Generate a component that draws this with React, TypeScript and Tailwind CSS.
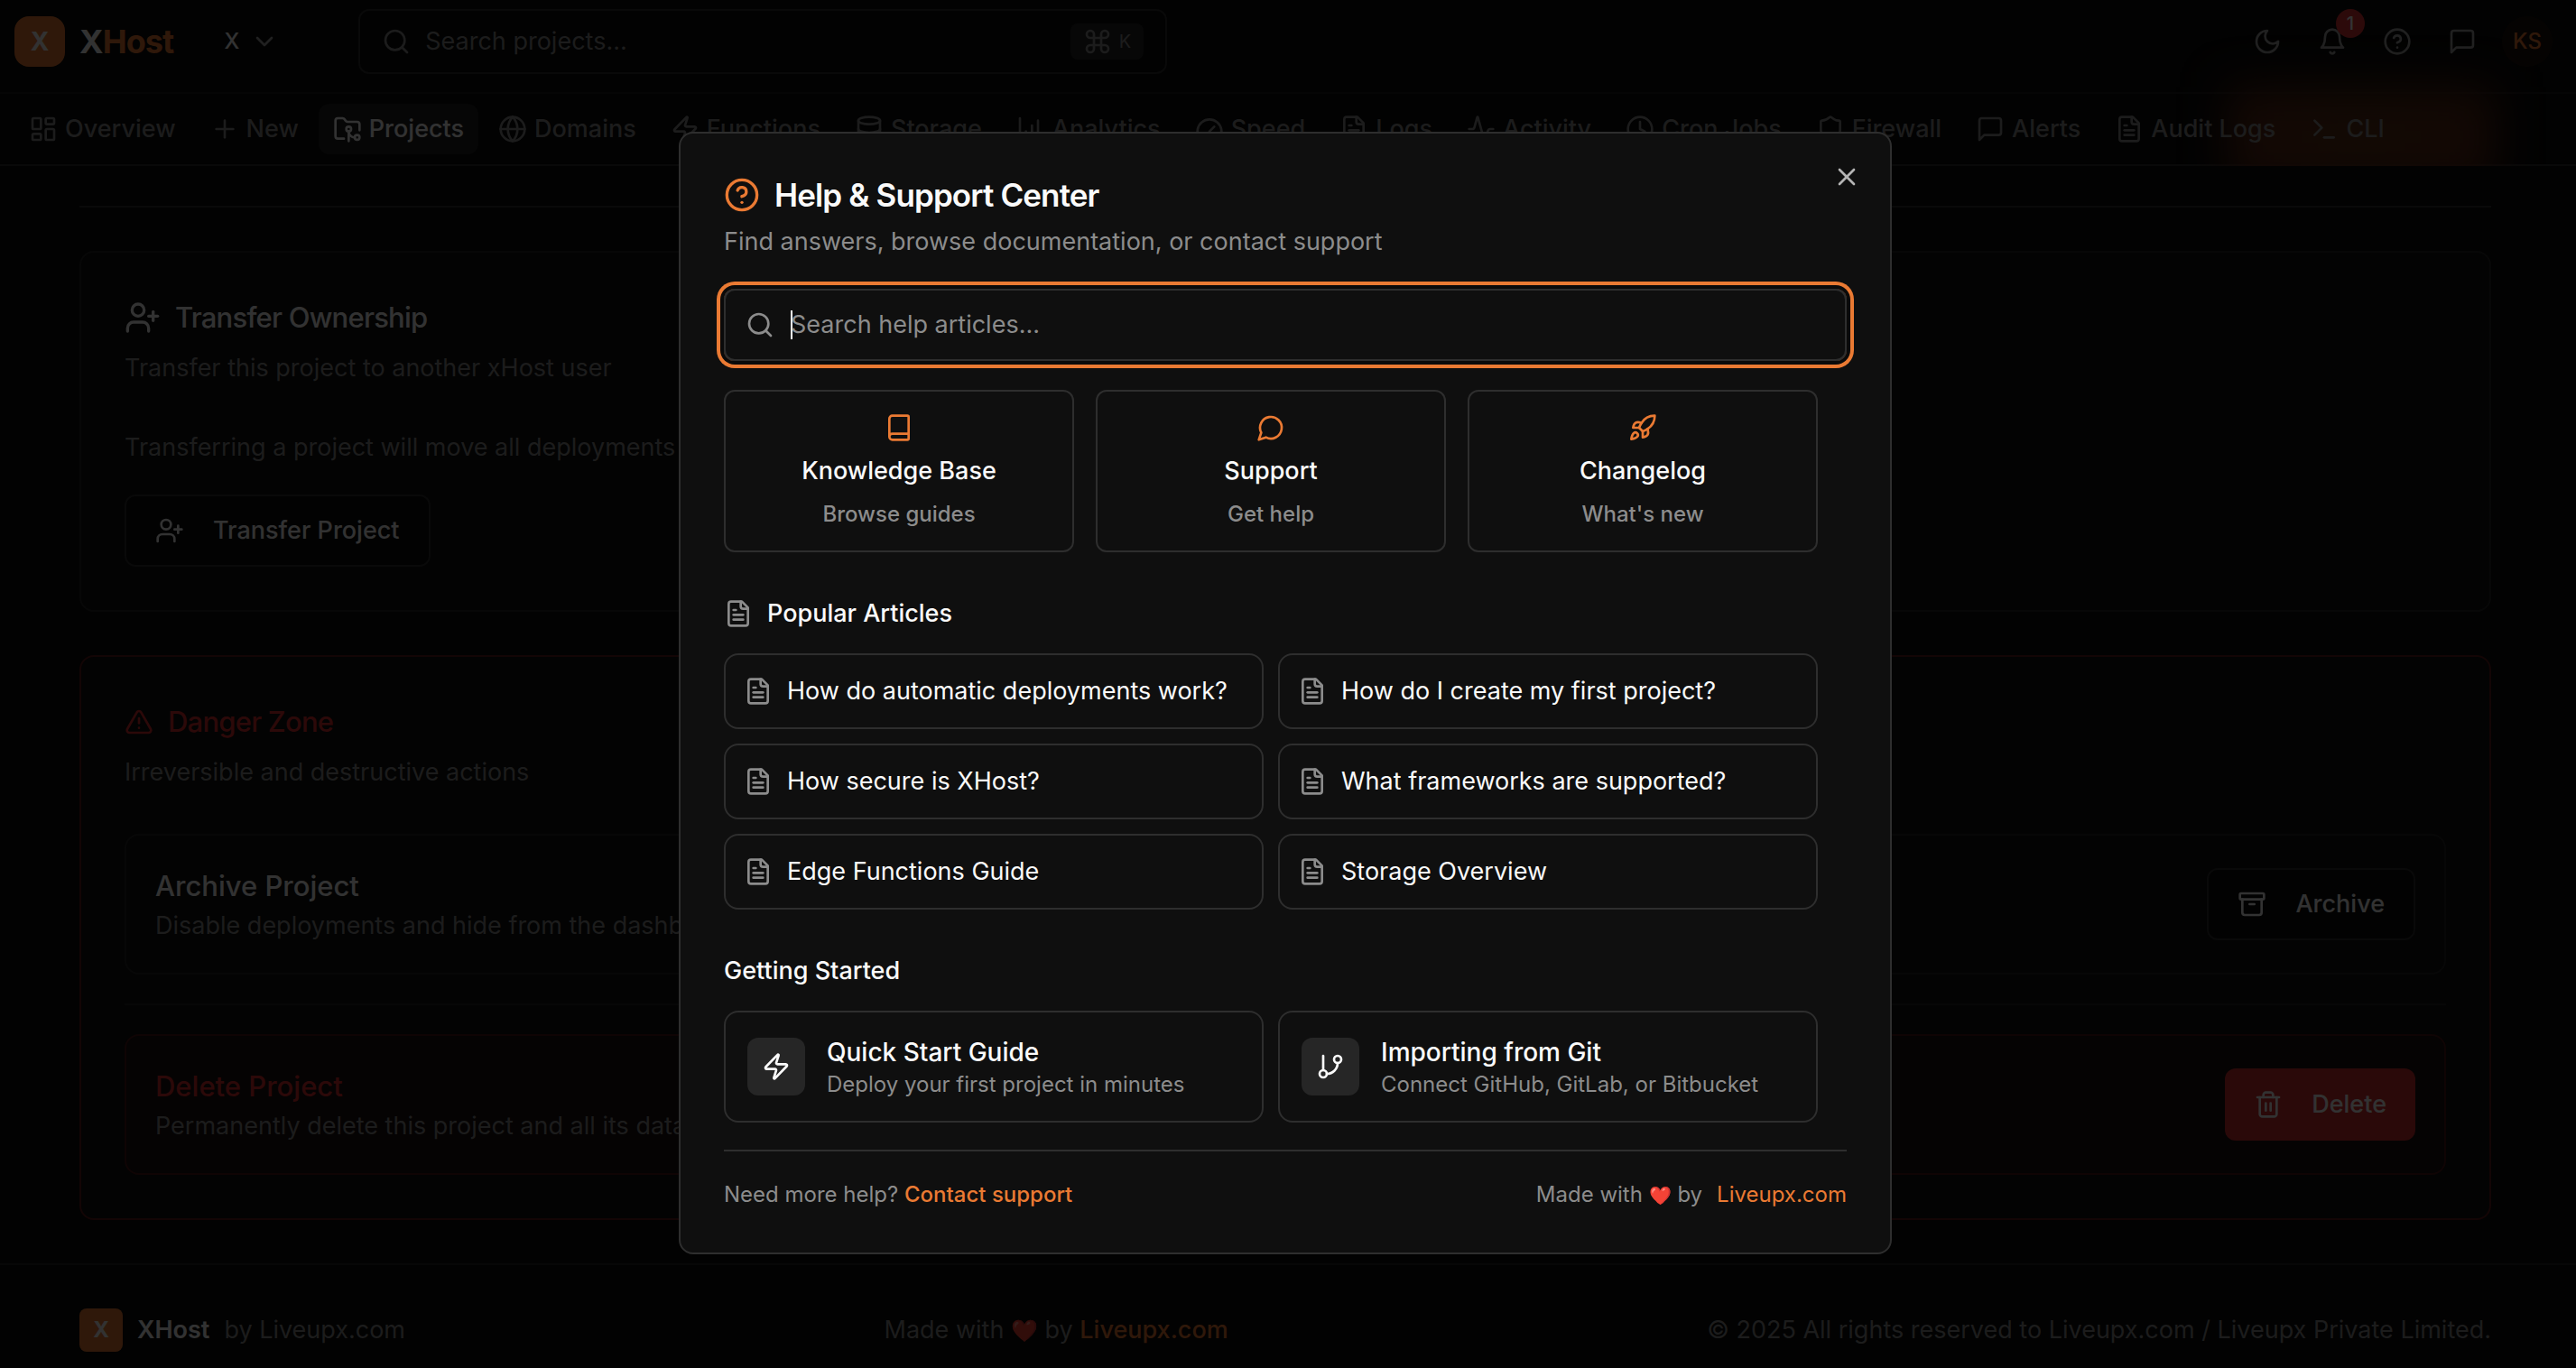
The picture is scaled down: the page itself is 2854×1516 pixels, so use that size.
import type { ReactNode } from "react";
import {
  Activity,
  Archive,
  ChartColumnIncreasing,
  ChevronDown,
  CircleHelp,
  Clock,
  Command,
  Database,
  FolderGit2,
  Gauge,
  Globe,
  LayoutDashboard,
  Plus,
  Search,
  Shield,
  Terminal,
  TriangleAlert,
  X,
} from "lucide-react";

type IconProps = { className?: string };

function Glyph({ className, children }: IconProps & { children: ReactNode }) {
  return (
    <svg
      viewBox="0 0 24 24"
      fill="none"
      stroke="currentColor"
      strokeWidth="2"
      strokeLinecap="round"
      strokeLinejoin="round"
      aria-hidden="true"
      className={className}
    >
      {children}
    </svg>
  );
}

const FileText = ({ className }: IconProps) => (
  <Glyph className={className}>
    <path d="M15 2H6a2 2 0 0 0-2 2v16a2 2 0 0 0 2 2h12a2 2 0 0 0 2-2V7Z" />
    <path d="M14 2v4a2 2 0 0 0 2 2h4" />
    <path d="M10 9H8" />
    <path d="M16 13H8" />
    <path d="M16 17H8" />
  </Glyph>
);

const MessageSquare = ({ className }: IconProps) => (
  <Glyph className={className}>
    <path d="M21 15a2 2 0 0 1-2 2H7l-4 4V5a2 2 0 0 1 2-2h14a2 2 0 0 1 2 2z" />
  </Glyph>
);

const MessageCircle = ({ className }: IconProps) => (
  <Glyph className={className}>
    <path d="M7.9 20A9 9 0 1 0 4 16.1L2 22Z" />
  </Glyph>
);

const Book = ({ className }: IconProps) => (
  <Glyph className={className}>
    <path d="M4 19.5v-15A2.5 2.5 0 0 1 6.5 2H19a1 1 0 0 1 1 1v18a1 1 0 0 1-1 1H6.5a1 1 0 0 1 0-5H20" />
  </Glyph>
);

const Rocket = ({ className }: IconProps) => (
  <Glyph className={className}>
    <path d="M4.5 16.5c-1.5 1.26-2 5-2 5s3.74-.5 5-2c.71-.84.7-2.13-.09-2.91a2.18 2.18 0 0 0-2.91-.09z" />
    <path d="m12 15-3-3a22 22 0 0 1 2-3.95A12.88 12.88 0 0 1 22 2c0 2.72-.78 7.5-6 11a22.35 22.35 0 0 1-4 2z" />
    <path d="M9 12H4s.55-3.03 2-4c1.62-1.08 5 0 5 0" />
    <path d="M12 15v5s3.03-.55 4-2c1.08-1.62 0-5 0-5" />
  </Glyph>
);

const Zap = ({ className }: IconProps) => (
  <Glyph className={className}>
    <path d="M4 14a1 1 0 0 1-.78-1.63l9.9-10.2a.5.5 0 0 1 .86.46l-1.92 6.02A1 1 0 0 0 13 10h7a1 1 0 0 1 .78 1.63l-9.9 10.2a.5.5 0 0 1-.86-.46l1.92-6.02A1 1 0 0 0 11 14z" />
  </Glyph>
);

const GitBranch = ({ className }: IconProps) => (
  <Glyph className={className}>
    <line x1="6" x2="6" y1="3" y2="15" />
    <circle cx="18" cy="6" r="3" />
    <circle cx="6" cy="18" r="3" />
    <path d="M18 9a9 9 0 0 1-9 9" />
  </Glyph>
);

const Moon = ({ className }: IconProps) => (
  <Glyph className={className}>
    <path d="M12 3a6 6 0 0 0 9 9 9 9 0 1 1-9-9Z" />
  </Glyph>
);

const Bell = ({ className }: IconProps) => (
  <Glyph className={className}>
    <path d="M6 8a6 6 0 0 1 12 0c0 7 3 9 3 9H3s3-2 3-9" />
    <path d="M10.3 21a1.94 1.94 0 0 0 3.4 0" />
  </Glyph>
);

const UserPlus = ({ className }: IconProps) => (
  <Glyph className={className}>
    <path d="M16 21v-2a4 4 0 0 0-4-4H6a4 4 0 0 0-4 4v2" />
    <circle cx="9" cy="7" r="4" />
    <line x1="19" x2="19" y1="8" y2="14" />
    <line x1="22" x2="16" y1="11" y2="11" />
  </Glyph>
);

const Trash = ({ className }: IconProps) => (
  <Glyph className={className}>
    <path d="M3 6h18" />
    <path d="M19 6v14c0 1-1 2-2 2H7c-1 0-2-1-2-2V6" />
    <path d="M8 6V4c0-1 1-2 2-2h4c1 0 2 1 2 2v2" />
    <line x1="10" x2="10" y1="11" y2="17" />
    <line x1="14" x2="14" y1="11" y2="17" />
  </Glyph>
);

type IconType = (props: IconProps) => ReactNode;

const NAV: { label: string; icon: IconType | typeof Globe; active?: boolean }[] = [
  { label: "Overview", icon: LayoutDashboard },
  { label: "New", icon: Plus },
  { label: "Projects", icon: FolderGit2, active: true },
  { label: "Domains", icon: Globe },
  { label: "Functions", icon: Zap },
  { label: "Storage", icon: Database },
  { label: "Analytics", icon: ChartColumnIncreasing },
  { label: "Speed", icon: Gauge },
  { label: "Logs", icon: FileText },
  { label: "Activity", icon: Activity },
  { label: "Cron Jobs", icon: Clock },
  { label: "Firewall", icon: Shield },
  { label: "Alerts", icon: MessageSquare },
  { label: "Audit Logs", icon: FileText },
  { label: "CLI", icon: Terminal },
];

const QUICK = [
  { title: "Knowledge Base", note: "Browse guides", icon: Book },
  { title: "Support", note: "Get help", icon: MessageCircle },
  { title: "Changelog", note: "What's new", icon: Rocket },
];

const ARTICLES = [
  "How do automatic deployments work?",
  "How do I create my first project?",
  "How secure is XHost?",
  "What frameworks are supported?",
  "Edge Functions Guide",
  "Storage Overview",
];

const GUIDES = [
  { title: "Quick Start Guide", note: "Deploy your first project in minutes", icon: Zap },
  { title: "Importing from Git", note: "Connect GitHub, GitLab, or Bitbucket", icon: GitBranch },
];

function Header() {
  return (
    <header className="flex h-[104px] items-center border-b-2 border-[#1c1c1c] pr-[22px] pb-[10px] pl-4">
      <a href="#" className="flex items-center gap-4">
        <span className="flex size-14 items-center justify-center rounded-2xl bg-[#ea7a33] text-[28px] font-bold">
          X
        </span>
        <span className="text-4xl font-bold tracking-tight">
          X<span className="text-[#ea7a33]">Host</span>
        </span>
      </a>
      <button className="ml-14 flex items-center gap-3 text-2xl font-medium">
        X
        <ChevronDown className="size-8 text-[#a0a0a0]" />
      </button>
      <div className="ml-22 flex h-[72px] w-full max-w-[896px] items-center rounded-xl border-2 border-[#2e2e2e] px-6">
        <Search className="size-8 shrink-0 text-[#8c8c8c]" />
        <input
          aria-label="Search projects"
          placeholder="Search projects..."
          className="ml-4 w-full min-w-0 bg-transparent text-[27px] outline-none placeholder:text-[#8c8c8c]"
        />
        <kbd className="flex h-10 shrink-0 items-center gap-2 rounded-lg bg-[#262626] px-3.5 font-[Inter] text-xl text-[#8c8c8c]">
          <Command className="size-8" />K
        </kbd>
      </div>
      <div className="ml-auto flex shrink-0 items-center gap-2 text-[#a0a0a0]">
        <button aria-label="Toggle theme" className="flex size-16 items-center justify-center">
          <Moon className="size-8" />
        </button>
        <button aria-label="Notifications" className="relative flex size-16 items-center justify-center">
          <Bell className="size-8" />
          <span className="absolute -top-1 -right-1 flex size-8 items-center justify-center rounded-full bg-[#dc3333] text-xl font-medium text-white">
            1
          </span>
        </button>
        <button aria-label="Help" className="flex size-16 items-center justify-center">
          <CircleHelp className="size-8" />
        </button>
        <button aria-label="Feedback" className="flex size-16 items-center justify-center">
          <MessageSquare className="size-8" />
        </button>
        <button aria-label="Account" className="flex size-16 items-center justify-center">
          <span className="flex size-14 items-center justify-center rounded-full bg-[#1d130c] text-2xl font-medium text-[#ea7a33]">
            KS
          </span>
        </button>
      </div>
    </header>
  );
}

function Nav() {
  return (
    <nav className="relative flex h-20 items-center gap-1.5 border-b-2 border-[#2e2e2e] px-4 whitespace-nowrap">
      <div className="absolute -top-2 right-[90px] h-28 w-[296px] bg-linear-to-r from-[#5e2816] via-[#5c3016] to-[#5e2816] blur-xl" />
      {NAV.map(({ label, icon: Icon, active }) => (
        <a
          key={label}
          href="#"
          className={
            active
              ? "relative flex h-14 items-center gap-2 rounded-xl bg-[#222222] px-4 text-[27px] font-medium text-[#fafafa]"
              : "relative flex h-14 items-center gap-2 rounded-xl px-4 text-[27px] font-medium text-[#8c8c8c]"
          }
        >
          <Icon className="size-8 shrink-0" />
          {label}
        </a>
      ))}
    </nav>
  );
}

function Page() {
  return (
    <div className="relative bg-[#0a0a0a]">
      <main className="mr-[6px] px-22 pb-12">
        <div className="h-[46px] border-b-2 border-[#2e2e2e]" />
        <section className="mt-12 rounded-2xl border-2 border-[#262626] bg-[#0f0f0f] p-12">
          <h2 className="flex h-12 items-center gap-4 text-[31px] font-medium tracking-tight">
            <UserPlus className="size-10" />
            Transfer Ownership
          </h2>
          <p className="mt-3 text-[27px] leading-10 text-[#8c8c8c]">
            Transfer this project to another xHost user
          </p>
          <p className="mt-12 text-[27px] leading-10 text-[#8c8c8c]">
            Transferring a project will move all deployments too
          </p>
          <button className="mt-8 flex h-20 items-center gap-8 rounded-xl border-2 border-[#2e2e2e] bg-[#0a0a0a] px-8 text-[27px] font-medium">
            <UserPlus className="size-8" />
            Transfer Project
          </button>
        </section>

        <section className="mt-12 rounded-2xl border-2 border-[#5f1a1a] bg-[#0f0f0f] p-12">
          <h2 className="flex h-12 items-center gap-4 text-[31px] font-medium tracking-tight text-[#dc2f2f]">
            <TriangleAlert className="size-8" />
            Danger Zone
          </h2>
          <p className="mt-3 text-[27px] leading-10 text-[#8c8c8c]">Irreversible and destructive actions</p>

          <div className="mt-12 flex items-center justify-between rounded-2xl border-2 border-[#262626] p-8">
            <div>
              <h3 className="text-[31px] leading-12 font-medium">Archive Project</h3>
              <p className="text-[27px] leading-10 text-[#8c8c8c]">
                Disable deployments and hide from the dashboard
              </p>
            </div>
            <button className="flex h-20 items-center gap-8 rounded-xl border-2 border-[#2e2e2e] bg-[#0a0a0a] px-8 text-[27px] font-medium">
              <Archive className="size-8" />
              Archive
            </button>
          </div>

          <hr className="my-8 border-t-2 border-[#262626]" />

          <div className="flex items-center justify-between rounded-2xl border-2 border-[#4c1717] bg-[#190f10] p-8">
            <div>
              <h3 className="text-[31px] leading-12 font-medium text-[#dc2f2f]">Delete Project</h3>
              <p className="text-[27px] leading-10 text-[#8c8c8c]">
                Permanently delete this project and all its data
              </p>
            </div>
            <button className="flex h-20 items-center gap-8 rounded-xl bg-[#d32f2f] px-8 text-[27px] font-medium">
              <Trash className="size-8" />
              Delete
            </button>
          </div>
        </section>
      </main>

      <footer className="border-t-2 border-[#262626] pt-12 pr-[6px] pb-4">
        <div className="flex items-center justify-between px-22 text-[27px] leading-12 text-[#8c8c8c]">
          <div className="flex items-center gap-4">
            <span className="flex size-12 items-center justify-center rounded-lg bg-[#ea7a33] text-2xl font-bold text-[#fafafa]">
              X
            </span>
            <span className="font-semibold text-[#fafafa]">XHost</span>
            <span>by Liveupx.com</span>
          </div>
          <p>
            Made with <span className="text-2xl leading-none">❤️</span> by{" "}
            <a href="#" className="font-medium text-[#ea7a33]">
              Liveupx.com
            </a>
          </p>
          <p>© 2025 All rights reserved to Liveupx.com / Liveupx Private Limited.</p>
        </div>
      </footer>
    </div>
  );
}

function HelpDialog() {
  return (
    <div
      role="dialog"
      aria-modal="true"
      aria-labelledby="help-title"
      className="relative w-full max-w-[1344px] rounded-2xl border-2 border-[#2e2e2e] bg-[#0f0f0f] p-12"
    >
      <button aria-label="Close" className="absolute top-8 right-8 text-[#b4b4b4]">
        <X className="size-8" />
      </button>
      <h1 id="help-title" className="flex h-10 items-center gap-4 text-[35px] font-semibold tracking-tight">
        <CircleHelp className="size-10 text-[#ea7a33]" />
        Help &amp; Support Center
      </h1>
      <p className="mt-3 text-[27px] leading-10 text-[#8c8c8c]">
        Find answers, browse documentation, or contact support
      </p>

      <div className="mt-8 flex h-20 items-center rounded-xl border-2 border-[#2e2e2e] px-[22px] ring-4 ring-[#ea7a33] ring-offset-4 ring-offset-[#0a0a0a]">
        <Search className="size-8 shrink-0 text-[#8c8c8c]" />
        <span className="ml-[18px] h-8 w-0.5 shrink-0 bg-white" />
        <input
          aria-label="Search help articles"
          placeholder="Search help articles..."
          className="-ml-0.5 w-full min-w-0 bg-transparent text-[27px] outline-none placeholder:text-[#8c8c8c]"
        />
      </div>

      <div className="mt-8 pr-8">
        <div className="grid grid-cols-3 gap-6">
          {QUICK.map(({ title, note, icon: Icon }) => (
            <button
              key={title}
              className="flex flex-col items-center gap-3 rounded-xl border-2 border-[#2e2e2e] p-6 font-medium"
            >
              <Icon className="size-8 text-[#ea7a33]" />
              <span className="text-[27px] leading-10">{title}</span>
              <span className="text-2xl leading-8 text-[#8c8c8c]">{note}</span>
            </button>
          ))}
        </div>

        <h2 className="mt-12 flex items-center gap-4 text-[27px] leading-10 font-medium">
          <FileText className="size-8 text-[#8c8c8c]" />
          Popular Articles
        </h2>
        <div className="mt-6 grid grid-cols-2 gap-4">
          {ARTICLES.map((title) => (
            <button
              key={title}
              className="flex items-center gap-4 rounded-2xl border-2 border-[#2e2e2e] p-5 text-left text-[27px] leading-10"
            >
              <FileText className="size-8 shrink-0 text-[#8c8c8c]" />
              {title}
            </button>
          ))}
        </div>

        <h2 className="mt-12 text-[27px] leading-10 font-medium">Getting Started</h2>
        <div className="mt-6 grid grid-cols-2 gap-4">
          {GUIDES.map(({ title, note, icon: Icon }) => (
            <button
              key={title}
              className="flex items-center gap-6 rounded-2xl border-2 border-[#2e2e2e] p-6 text-left"
            >
              <span className="flex size-16 shrink-0 items-center justify-center rounded-xl bg-[#262626]">
                <Icon className="size-8" />
              </span>
              <span className="flex flex-col">
                <span className="text-[28px] leading-10 font-medium">{title}</span>
                <span className="text-2xl leading-8 text-[#8c8c8c]">{note}</span>
              </span>
            </button>
          ))}
        </div>
      </div>

      <div className="mt-[30px] flex items-center justify-between border-t-2 border-[#2e2e2e] pt-8 text-2xl leading-8 text-[#8c8c8c]">
        <p>
          Need more help?{" "}
          <a href="#" className="font-medium text-[#ea7a33]">
            Contact support
          </a>
        </p>
        <p className="flex gap-4">
          <span>
            Made with <span className="text-xl leading-none">❤️</span> by
          </span>
          <a href="#" className="text-[#ea7a33]">
            Liveupx.com
          </a>
        </p>
      </div>
    </div>
  );
}

export default function App() {
  return (
    <div className="h-screen overflow-hidden bg-[#0a0a0a] font-[Inter,sans-serif] text-[#fafafa]">
      <Header />
      <Nav />
      <Page />
      <div className="fixed inset-0 flex items-start justify-center bg-black/80 pt-[146px] pr-[6px]">
        <HelpDialog />
      </div>
    </div>
  );
}
